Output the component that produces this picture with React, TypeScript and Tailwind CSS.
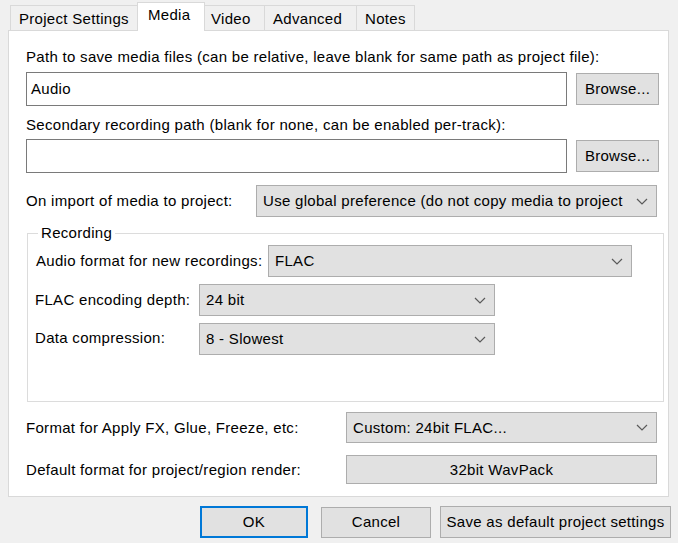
import React from "react";

const Chevron = () => (
  <svg width="12" height="7" viewBox="0 0 12 7" className="shrink-0">
    <polyline points="1,1 6,6 11,1" fill="none" stroke="#5a5a5a" strokeWidth="1.2" />
  </svg>
);

function Select({ value, className }: { value: string; className: string }) {
  return (
    <div
      className={
        "flex items-center justify-between bg-[#e1e1e1] border border-[#adadad] pl-[6px] pr-[8px] " +
        className
      }
    >
      <span className="whitespace-nowrap overflow-hidden">{value}</span>
      <Chevron />
    </div>
  );
}

function Button({ label, className }: { label: string; className: string }) {
  return (
    <div
      className={
        "flex items-center justify-center bg-[#e1e1e1] border border-[#adadad] whitespace-nowrap " +
        className
      }
    >
      {label}
    </div>
  );
}

export default function App() {
  return (
    <div
      className="w-[678px] h-[543px] bg-[#f0f0f0] text-[15px] leading-[18px] tracking-[0.3px] text-[#000] overflow-hidden"
      style={{ fontFamily: '"Liberation Sans", Arial, sans-serif' }}
    >
      {/* Tabs */}
      <div className="flex items-end h-[30px] pl-[10px] pt-[2px]">
        <div className="w-[127px] h-[25px] border-l border-t border-[#d9d9d9] bg-[#f0f0f0] pl-[8px] pt-[4px]">
          Project Settings
        </div>
        <div className="relative z-10 w-[68px] h-[29px] mb-[-1px] border-l border-r border-t border-[#d9d9d9] bg-white pl-[10px] pt-[3px]">
          Media
        </div>
        <div className="w-[60px] h-[25px] border-t border-r border-[#d9d9d9] bg-[#f0f0f0] pl-[6px] pt-[4px]">
          Video
        </div>
        <div className="w-[92px] h-[25px] border-t border-r border-[#d9d9d9] bg-[#f0f0f0] pl-[8px] pt-[4px]">
          Advanced
        </div>
        <div className="w-[58px] h-[25px] border-t border-r border-[#d9d9d9] bg-[#f0f0f0] pl-[8px] pt-[4px]">
          Notes
        </div>
      </div>

      {/* Panel */}
      <div className="ml-[8px] w-[661px] h-[467px] border border-[#d9d9d9] bg-white pl-[17px] pt-[17px] flex flex-col">
        <div className="h-[18px] whitespace-nowrap">
          Path to save media files (can be relative, leave blank for same path as project file):
        </div>
        <div className="flex items-center mt-[6px] gap-[9px]">
          <div className="w-[541px] h-[34px] border border-[#7a7a7a] bg-white flex items-center pl-[4px]">
            Audio
          </div>
          <Button label="Browse..." className="w-[83px] h-[32px]" />
        </div>

        <div className="h-[18px] mt-[10px] whitespace-nowrap">
          Secondary recording path (blank for none, can be enabled per-track):
        </div>
        <div className="flex items-center mt-[5px] gap-[9px]">
          <div className="w-[541px] h-[34px] border border-[#7a7a7a] bg-white" />
          <Button label="Browse..." className="w-[83px] h-[32px]" />
        </div>

        <div className="flex items-center mt-[12px]">
          <div className="w-[230px] whitespace-nowrap">On import of media to project:</div>
          <Select
            value="Use global preference (do not copy media to project"
            className="w-[401px] h-[32px]"
          />
        </div>

        {/* Recording group */}
        <div className="relative ml-[1px] mt-[16px] w-[637px] h-[169px] border border-[#dcdcdc] pl-[8px] pt-[11px] flex flex-col">
          <span className="absolute left-[10px] top-[-10px] bg-white px-[3px]">Recording</span>
          <div className="flex items-center">
            <div className="w-[232px] whitespace-nowrap">Audio format for new recordings:</div>
            <Select value="FLAC" className="w-[364px] h-[32px]" />
          </div>
          <div className="flex items-center mt-[7px]">
            <div className="w-[163px] -ml-[1px] whitespace-nowrap">FLAC encoding depth:</div>
            <Select value="24 bit" className="w-[296px] h-[32px] ml-[1px]" />
          </div>
          <div className="flex items-center mt-[7px]">
            <div className="w-[163px] -ml-[1px] mt-[-3px] whitespace-nowrap">Data compression:</div>
            <Select value="8 - Slowest" className="w-[296px] h-[32px] ml-[1px]" />
          </div>
        </div>

        <div className="flex items-center mt-[10px]">
          <div className="w-[320px] whitespace-nowrap">Format for Apply FX, Glue, Freeze, etc:</div>
          <Select value="Custom: 24bit FLAC..." className="w-[311px] h-[31px]" />
        </div>
        <div className="flex items-center mt-[12px]">
          <div className="w-[320px] whitespace-nowrap">Default format for project/region render:</div>
          <Button label="32bit WavPack" className="w-[311px] h-[29px]" />
        </div>
      </div>

      {/* Bottom buttons */}
      <div className="flex justify-end items-center mt-[9px] pr-[7px]">
        <div className="w-[108px] h-[32px] flex items-center justify-center bg-[#e1e1e1] border-2 border-[#0078d7]">
          OK
        </div>
        <Button label="Cancel" className="w-[110px] h-[31px] ml-[13px]" />
        <Button label="Save as default project settings" className="w-[231px] h-[32px] ml-[9px]" />
      </div>
    </div>
  );
}
